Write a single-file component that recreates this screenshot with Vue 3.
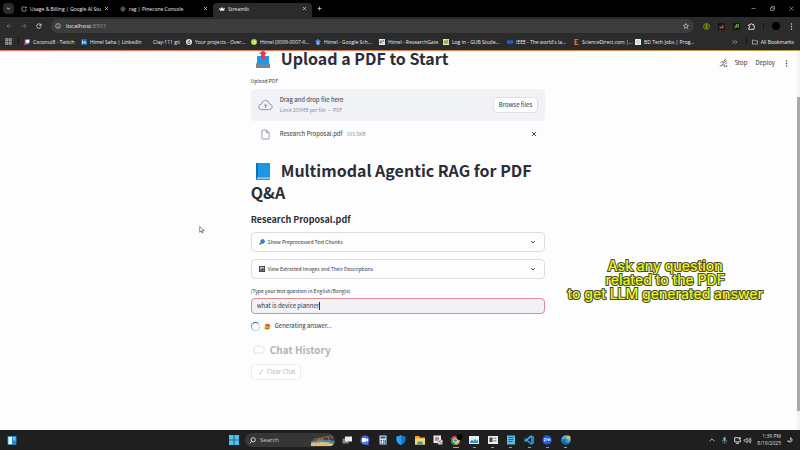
<script setup>
import { ref } from 'vue'

const question = ref('what is device planner')

const tabs = [
  { title: 'Usage & Billing | Google AI Stu', icon: 'studio', active: false },
  { title: 'rag | Pinecone Console', icon: 'pinecone', active: false },
  { title: 'Streamlit', icon: 'crown', active: true },
]

const bookmarks = [
  { label: 'Coconut8 - Twitch', icon: 'twitch' },
  { label: 'Himel Saha | LinkedIn', icon: 'linkedin' },
  { label: 'Clay-111 git', icon: 'none' },
  { label: 'Your projects - Over...', icon: 'overleaf' },
  { label: 'Himel (0009-0007-6...', icon: 'orcid' },
  { label: 'Himel - Google Sch...', icon: 'scholar' },
  { label: 'Himel - ResearchGate', icon: 'gate' },
  { label: 'Log in - GUB Stude...', icon: 'gub' },
  { label: "IEEE - The world's la...", icon: 'ieee' },
  { label: 'ScienceDirect.com |...', icon: 'science' },
  { label: 'BD Tech Jobs | Prog...', icon: 'jobs' },
]

const apps = [
  { name: 'Task view', icon: 'taskview' },
  { name: 'Chat', icon: 'chat' },
  { name: 'Calculator', icon: 'calc' },
  { name: 'Security', icon: 'shield' },
  { name: 'File Explorer', icon: 'folder' },
  { name: 'Snipping Tool', icon: 'snip' },
  { name: 'Chrome', icon: 'chrome', open: true, current: true },
  { name: 'Task Manager', icon: 'monitor', open: true },
  { name: 'Viewer', icon: 'viewer', open: true },
  { name: 'Notepad', icon: 'notepad', open: true },
  { name: 'VS Code', icon: 'code', open: true },
  { name: 'Zoom', icon: 'zm', open: true },
  { name: 'Edge', icon: 'edge', open: true },
]
</script>

<template>
  <div class="screen">
    <header class="browser">
      <div class="tabstrip">
        <button class="tab-search" aria-label="Search tabs">
          <svg viewBox="0 0 10 10"><path d="M3 4l2 2 2-2" class="line bold" /></svg>
        </button>
        <div v-for="t in tabs" :key="t.title" class="tab" :class="{ active: t.active }">
          <svg viewBox="0 0 10 10" class="fav">
            <path v-if="t.icon === 'studio'" d="M6 1.5H3Q1.5 1.5 1.5 3v4Q1.5 8.5 3 8.5h4Q8.5 8.5 8.5 7V5M8 1v3M6.500 2.500h3" class="line" />
            <g v-else-if="t.icon === 'pinecone'" class="line dim"><circle cx="5" cy="5" r="3.500" /><path d="M5 1v8M2 4h6M2 6.500h6" /></g>
            <path v-else d="M0 2.500l2.500 2L5 1.500l2.500 3L10 2.500 8.500 8h-7z" fill="#eee" />
          </svg>
          <span class="tab-title">{{ t.title }}</span>
          <button class="plain" :aria-label="'Close ' + t.title">
            <svg viewBox="0 0 10 10"><path d="M2 2l6 6M8 2L2 8" class="line bold" /></svg>
          </button>
        </div>
        <button class="plain new-tab" aria-label="New tab">
          <svg viewBox="0 0 10 10"><path d="M5 1v8M1 5h8" class="line bold" /></svg>
        </button>
        <div class="window-buttons">
          <button class="plain" aria-label="Minimize"><svg viewBox="0 0 10 10"><path d="M1 5h8" class="line" /></svg></button>
          <button class="plain" aria-label="Restore"><svg viewBox="0 0 10 10"><path d="M1 3.500h5.500V9H1zM3 3V1h6v6H7" class="line" /></svg></button>
          <button class="plain" aria-label="Close window"><svg viewBox="0 0 10 10"><path d="M1 1l8 8M9 1L1 9" class="line" /></svg></button>
        </div>
      </div>

      <div class="toolbar">
        <button class="plain dimmed" aria-label="Back"><svg viewBox="0 0 10 10"><path d="M9 5H1.500M5 1.500L1.500 5 5 8.500" class="line" /></svg></button>
        <button class="plain dimmed" aria-label="Forward"><svg viewBox="0 0 10 10"><path d="M1 5h7.500M5 1.500L8.500 5 5 8.500" class="line" /></svg></button>
        <button class="plain" aria-label="Reload"><svg viewBox="0 0 10 10"><path d="M8.200 3.500A3.700 3.700 0 1 0 8.500 6M8.600 1v3H5.600" class="line bold" /></svg></button>
        <div class="omnibox">
          <svg viewBox="0 0 10 10" class="site"><circle cx="5" cy="5" r="4" class="line" /><path d="M5 4.500v3M5 2.500v1" class="line" /></svg>
          <span class="url">localhost<i>:8501</i></span>
          <svg viewBox="0 0 10 10" class="star"><path d="M5 .8l1.300 2.800 3 .4-2.200 2 .6 3L5 7.500 2.300 9l.6-3-2.200-2 3-.4z" class="line" /></svg>
        </div>
        <div class="extensions">
          <svg viewBox="0 0 10 10"><circle cx="5" cy="5" r="4.300" fill="#41420f" stroke="#8f9420" /><path d="M5 2v6M3.500 3.500h3M3.500 6.500h3" stroke="#a5a92b" /></svg>
          <svg viewBox="0 0 10 10"><rect width="10" height="10" rx="1" fill="#151515" /><path d="M2 5h4V3h2v5H2z" fill="#b04c38" /></svg>
          <svg viewBox="0 0 10 10"><rect width="10" height="10" rx="1" fill="#101510" /><path d="M3 8V4h4M5 2h3v4H5z" fill="none" stroke="#69b34a" stroke-width="1.200" /></svg>
          <svg viewBox="0 0 10 10" class="puzzle"><path d="M1 2.500h2.500Q3.500 1 5 1t1.500 1.500H8.500V5Q9.500 5.200 9.500 6t-1 1v2H1V6.800Q2.500 6.500 2.500 5.500T1 4.300z" class="line bold" /></svg>
          <span class="sep"></span>
          <span class="avatar"></span>
          <button class="plain" aria-label="Browser menu"><svg viewBox="0 0 10 10" fill="#ddd"><circle cx="5" cy="1.500" r="1" /><circle cx="5" cy="5" r="1" /><circle cx="5" cy="8.500" r="1" /></svg></button>
        </div>
      </div>

      <nav class="bookmarks" aria-label="Bookmarks">
        <svg viewBox="0 0 10 10" class="apps-grid"><path d="M1 1h3v3H1zM6 1h3v3H6zM1 6h3v3H1zM6 6h3v3H6z" class="line" /></svg>
        <span class="sep"></span>
        <a v-for="b in bookmarks" :key="b.label" href="#">
          <svg viewBox="0 0 10 10" class="bm">
            <g v-if="b.icon === 'twitch'"><path d="M1 2l1.500-2H10v6L7 9H5l-1 1V9H1z" fill="#8b5cf0" /><path d="M3 1.500h5.500V5L7 6.500H3z" fill="#fff" /><circle cx="2" cy="8" r="2" fill="#e33e58" /></g>
            <g v-else-if="b.icon === 'linkedin'"><rect width="10" height="10" rx="1" fill="#1769b5" /><path d="M2.500 4v4M2.500 2v1M5 4v4M5 5.500q0-1.500 1.400-1.500T8 5.500V8" stroke="#fff" fill="none" stroke-width="1.300" /></g>
            <g v-else-if="b.icon === 'overleaf'"><circle cx="5" cy="5" r="5" fill="#eee" /><path d="M7 1.500Q3 3 3 6a2 2 0 1 0 2-2" fill="none" stroke="#315a58" stroke-width="1.500" /></g>
            <g v-else-if="b.icon === 'orcid'"><circle cx="5" cy="5" r="5" fill="#a6ce39" /><path d="M3 3v4.500M5 3v4.500h1q2-.5 2-2.200T6 3z" stroke="#fff" fill="none" /></g>
            <g v-else-if="b.icon === 'scholar'"><path d="M0 4l5-4 5 4-5 3z" fill="#4285f4" /><circle cx="5" cy="7" r="3" fill="#78aaf4" /></g>
            <g v-else-if="b.icon === 'gate'"><rect width="10" height="10" fill="#eee" /><path d="M2 8V3h2q1.500 0 1.500 1.300T4 5.700H2M4 5.700L6 8M8.500 2H7v2h1.500V3" fill="none" stroke="#444" /></g>
            <g v-else-if="b.icon === 'gub'"><rect width="10" height="10" fill="#e7edbb" /><path d="M2 8V3h2v5M6 8V2h2v6" stroke="#7c9d25" stroke-width="1.500" fill="none" /></g>
            <g v-else-if="b.icon === 'ieee'"><rect y="1" width="10" height="8" fill="#174596" /><path d="M1 3.500v3M3 3.500h1.500M3 5h1.500M3 6.500h1.500M6 3.500h1.500M6 5h1.500M6 6.500h1.500M9 3.500v3" stroke="#8daee8" stroke-width=".8" /></g>
            <g v-else-if="b.icon === 'science'"><path d="M2 1h7M2 5h5M2 9h7M4 1v8" stroke="#e4793c" stroke-width="1.600" /></g>
            <g v-else-if="b.icon === 'jobs'"><rect width="10" height="10" rx="1" fill="#eee" /><circle cx="5" cy="5" r="2.500" fill="none" stroke="#aaa" /></g>
          </svg>
          {{ b.label }}
        </a>
        <div class="bookmarks-end">
          <svg viewBox="0 0 10 10"><path d="M1.500 2.500L4 5 1.500 7.500M5.500 2.500L8 5 5.500 7.500" class="line" /></svg>
          <span class="sep"></span>
          <a href="#"><svg viewBox="0 0 10 10" class="bm"><path d="M.8 1.800h3l1 1.200h4.400v5.500H.8z" class="line" /></svg>All Bookmarks</a>
        </div>
      </nav>
    </header>

    <main class="page">
      <div class="page-actions">
        <svg viewBox="0 0 12 12" class="runner"><circle cx="8.500" cy="2" r="1.300" /><path d="M7 4L3.500 3.500 2 5.500M7 4l2 2 2-1M7 4L4.500 7.500 7.500 8l-.5 3M4.500 7.500L4 9H1M9 8.500h2M8.500 10h2" /></svg>
        <button class="plain">Stop</button>
        <button class="plain">Deploy</button>
        <button class="plain" aria-label="App menu"><svg viewBox="0 0 10 10" fill="#444"><circle cx="5" cy="1.500" r="1.100" /><circle cx="5" cy="5" r="1.100" /><circle cx="5" cy="8.500" r="1.100" /></svg></button>
      </div>

      <div class="content">
        <h1 class="upload-title">
          <svg viewBox="0 0 16 18" class="emoji"><path d="M3 9h10l2 5v3H1v-3z" fill="#a7b0b7" /><path d="M1 14h4l1 1h4l1-1h4v4H1z" fill="#7b858d" /><path d="M2 6h12v8h-3l-1 1H6l-1-1H2z" fill="#1b98e8" /><path d="M6 9V4H4l4-4 4 4h-2v5z" fill="#e03e50" /></svg>Upload a PDF to Start
        </h1>

        <label for="pdf" class="field-label">Upload PDF</label>
        <section class="dropzone">
          <svg viewBox="0 0 16 12" class="cloud"><path d="M4 11Q.8 11 .8 8 .8 5.400 3.700 5 4.500 1 8 1t4.300 4Q15.200 5.400 15.200 8T12 11zM8 9.500V5.500M6.200 7L8 5.300 9.800 7" /></svg>
          <div class="drop-text">
            <span>Drag and drop file here</span>
            <small>Limit 200MB per file • PDF</small>
          </div>
          <button id="pdf" class="browse">Browse files</button>
        </section>
        <div class="file-row">
          <svg viewBox="0 0 10 12" class="file"><path d="M1 2Q1 1 2 1h4l3 3v6q0 1-1 1H2q-1 0-1-1zM6 1v3h3" /></svg>
          <span>Research Proposal.pdf</span>
          <small>193.5KB</small>
          <button class="plain remove" aria-label="Remove file"><svg viewBox="0 0 10 10"><path d="M1.500 1.500l7 7M8.500 1.500l-7 7" /></svg></button>
        </div>

        <h1 class="app-title">
          <svg viewBox="0 0 16 18" class="emoji"><path d="M1 1h14v16H1z" fill="#1e96e6" /><path d="M1 1h2v16H1z" fill="#0c72b8" /><path d="M2 15.500h13V17H2z" fill="#b8d7ea" /><path d="M1 16.800h14v1H1z" fill="#0c72b8" /></svg>Multimodal Agentic RAG for PDF Q&amp;A
        </h1>
        <h3>Research Proposal.pdf</h3>

        <button class="expander">
          <svg viewBox="0 0 10 10" class="mini"><path d="M4.500 5.500L1 9" stroke="#333b47" stroke-width="2" /><circle cx="6" cy="4" r="3.200" fill="#248de0" stroke="#17649e" /></svg>
          <span>Show Preprocessed Text Chunks</span>
          <svg viewBox="0 0 10 10" class="chevron"><path d="M2 3.500l3 3 3-3" /></svg>
        </button>
        <button class="expander">
          <svg viewBox="0 0 10 10" class="mini"><rect x=".7" y=".7" width="8.600" height="8.600" fill="#c5c5c5" stroke="#333" stroke-width="1.400" /><path d="M2 8V5l2 1 2-3 2 2v3z" fill="#444" /></svg>
          <span>View Extracted Images and Their Descriptions</span>
          <svg viewBox="0 0 10 10" class="chevron"><path d="M2 3.500l3 3 3-3" /></svg>
        </button>

        <label for="question" class="field-label">(Type your text question in English/Bangla)</label>
        <div class="question">
          <input id="question" v-model="question" type="text" autocomplete="off" spellcheck="false" />
          <span class="caret"></span>
        </div>

        <div class="status" role="status">
          <span class="spinner"></span>
          <svg viewBox="0 0 10 10" class="mini"><circle cx="5" cy="5.500" r="4.200" fill="#f3b62c" /><path d="M1 2l4-1 4 2-1 2-5-1z" fill="#d9573f" /><path d="M3 5.500h1M6 5.500h1M3 7.500q2 1 4 0" stroke="#613b16" fill="none" /><path d="M0 6l3 2-1 2z" fill="#e58d28" /></svg>
          Generating answer...
        </div>

        <h2>
          <svg viewBox="0 0 14 12" class="bubble"><path d="M2 9Q.7 7.500.7 5.500.7 1 7 1t6.300 4.500T7 10Q5 10 4 9.500L1.500 11z" /></svg>
          Chat History
        </h2>
        <button class="clear" disabled>
          <svg viewBox="0 0 10 10" class="mini"><path d="M8.500.5L4.500 6" stroke="#d9a49e" stroke-width="1.200" /><path d="M3 5l2.500 2L3 9.500l-2 0z" fill="#efd9a0" /></svg>
          Clear Chat
        </button>
      </div>

      <svg viewBox="0 0 10 14" class="pointer"><path d="M1 1v10l2.500-2.300 1.700 3.800 1.600-.8L5.200 8H9z" fill="#fff" stroke="#333" /></svg>
      <p class="callout">Ask any question<br />related to the PDF<br />to get LLM generated answer</p>
      <div class="scrollbar"><span></span></div>
    </main>

    <footer class="taskbar">
      <svg viewBox="0 0 10 10" class="widgets"><rect width="10" height="10" rx="1" fill="#2488d8" /><path d="M1 1h4v8H1z" fill="#f4fbff" /><path d="M6 1h3v4H6z" fill="#6bc7f6" /></svg>
      <div class="dock">
        <svg viewBox="0 0 10 10" class="start"><path d="M0 0h4.700v4.700H0zM5.300 0H10v4.700H5.300zM0 5.300h4.700V10H0zM5.300 5.300H10V10H5.300z" fill="#4cc2f5" /></svg>
        <label class="search">
          <svg viewBox="0 0 10 10" class="glass"><circle cx="6" cy="4" r="3" class="line bold" /><path d="M4 6L1 9" class="line bold" /></svg>
          <input type="text" placeholder="Search" aria-label="Search" />
          <svg viewBox="0 0 24 11" class="scene"><path d="M0 6q12-3 24 0v3q-1 2-3 2H0z" fill="#3d86a8" /><path d="M0 8q12-3 23 1l-2 2H0z" fill="#ddbd80" /><path d="M2 4L20 0l3 3-2 1-2-2L4 6z" fill="#785640" /><path d="M8 3v5M17 2l3 7M4 8l8-4" stroke="#a97d58" fill="none" /></svg>
        </label>
        <div class="apps">
          <button v-for="a in apps" :key="a.name" class="app" :class="{ open: a.open, current: a.current }" :aria-label="a.name">
            <svg viewBox="0 0 20 20">
              <g v-if="a.icon === 'taskview'"><path d="M1 7h12v10H1z" fill="#858585" /><path d="M6 3h14v10H6z" fill="#e9e9e9" /></g>
              <g v-else-if="a.icon === 'chat'"><circle cx="10" cy="10" r="9" fill="#5663e8" /><path d="M1 10q1 8 8 9l9 1-2-4z" fill="#507bf0" /><rect x="4" y="6" width="8" height="8" rx="2" fill="#fff" /><path d="M12 9l4-3v8l-4-3z" fill="#fff" /></g>
              <g v-else-if="a.icon === 'calc'"><path d="M3 1h14v18H3z" fill="#d4e6ee" /><path d="M5 3h10v4H5z" fill="#245b83" /><path d="M5 10h3v3H5zM10 10h2v3h-2zM5 15h3v3H5zM10 15h2v3h-2z" fill="#526775" /><path d="M13 10h3v8h-3z" fill="#218bd6" /></g>
              <g v-else-if="a.icon === 'shield'"><path d="M10 0q4 3 9 3v6q0 7-9 11Q1 16 1 9V3q5 0 9-3z" fill="#1678ce" /><path d="M10 0v20Q1 16 1 9V3q5 0 9-3z" fill="#2da1ed" /></g>
              <g v-else-if="a.icon === 'folder'"><path d="M0 2h8l2 3h10v14H0z" fill="#e5a923" /><path d="M0 7h20v12H0z" fill="#ffd760" /><path d="M5 13h10v6H5z" fill="#3891cf" /></g>
              <g v-else-if="a.icon === 'snip'"><path d="M1 1h15v15H1z" fill="#eee" /><path d="M4 4h8v8H4z" fill="#c58a7f" /><path d="M10 10h9v9h-9z" fill="#cfd9df" /><path d="M7 18L18 8M12 12l6 6" stroke="#777" stroke-width="1.500" /></g>
              <g v-else-if="a.icon === 'chrome'"><circle cx="9" cy="11" r="9" fill="#e2b52c" /><path d="M1 6q3-5 8-4l8 5H9l-4 7z" fill="#dc4837" /><path d="M1 6l6 8 3 6Q2 20 0 13q-.5-4 1-7z" fill="#359c52" /><circle cx="9" cy="11" r="4" fill="#3986e4" stroke="#fff" stroke-width="1.500" /><circle cx="17" cy="4" r="6" fill="#050505" /></g>
              <g v-else-if="a.icon === 'monitor'"><path d="M0 2h20v16H0z" fill="#e6eef3" /><path d="M2 14l4-5 3 4 3-6 3 5 3-3v7H2z" fill="#2d8fc7" /></g>
              <g v-else-if="a.icon === 'viewer'"><path d="M0 2h20v16H0z" fill="#eee" /><path d="M3 5h6v9H3z" fill="#31543c" /><path d="M11 5h6v3h-6zM11 10h6v3h-6z" fill="#999" /></g>
              <g v-else-if="a.icon === 'notepad'"><path d="M2 1h16v18H2z" fill="#59b9e1" /><path d="M5 5h10M5 9h10M5 13h8" stroke="#174d6c" stroke-width="1.500" /></g>
              <g v-else-if="a.icon === 'code'"><path d="M14 0l6 3v14l-6 3L0 8l3-2 11 9z" fill="#2489ca" /><path d="M14 0v5L3 14l-3-2z" fill="#39a6ed" /></g>
              <g v-else-if="a.icon === 'zm'"><circle cx="10" cy="10" r="9.500" fill="#175ce5" /><path d="M4 7h4l-4 5h4M10 12V8h6v4M13 8v4" fill="none" stroke="#fff" stroke-width="1.400" /></g>
              <g v-else><circle cx="10" cy="10" r="9.500" fill="#2689d1" /><path d="M1 8Q3 0 11 1q9 1 8 9-1 4-6 3 2-6-4-6-5 0-8 1z" fill="#4db6d8" /><path d="M8 8q-3 6 3 8 4 1 7-2-5 8-13 3Q0 12 8 8z" fill="#125da8" /><circle cx="15" cy="5" r="4" fill="#efb43c" /></g>
            </svg>
          </button>
        </div>
      </div>
      <div class="tray">
        <svg viewBox="0 0 10 10" class="small"><path d="M1 7l4-4 4 4" class="line bold" /></svg>
        <svg viewBox="0 0 10 10"><rect x="3.500" y="0" width="3" height="6" rx="1.500" fill="#8fb8c4" /><path d="M1.500 4q0 4 3.500 4t3.500-4M5 8v2" fill="none" stroke="#4e92a6" /></svg>
        <div class="pair">
          <svg viewBox="0 0 10 10"><path d="M6 1H1v6h8V4M3 9h4M7 1h2v2H7z" class="line bold" /></svg>
          <svg viewBox="0 0 10 10"><path d="M0 4h2l2.500-2.500v7L2 6H0zM6 3.500q1 1.500 0 3M7.500 2q2 3 0 6M9 1q2 4 0 8" class="line" /></svg>
        </div>
        <div class="clock"><span>1:39 PM</span><span>8/19/2025</span></div>
        <svg viewBox="0 0 10 10" class="small"><path d="M6 1q4 3 2 6-3 3-7 0 4 0 5-2 1-2 0-4z" class="line bold" /></svg>
      </div>
    </footer>
  </div>
</template>

<style>
body {
  background: #fdfdfd;
}
</style>

<style scoped>
* {
  box-sizing: border-box;
}
.screen {
  display: flex;
  flex-direction: column;
  min-height: 100vh;
  color: #31333f;
  font-family: "Noto Sans CJK SC", "Noto Sans", sans-serif;
  font-size: 6px;
  line-height: 10px;
}
svg {
  display: block;
  flex: none;
  width: 7px;
  height: 7px;
  overflow: visible;
}
button {
  font: inherit;
  color: inherit;
}
.plain {
  display: flex;
  padding: 0;
  border: 0;
  background: none;
}
.line {
  fill: none;
  stroke: #ddd;
  stroke-width: 1;
}
.bold {
  stroke-width: 1.400;
}
.dim {
  stroke: #888;
}
.sep {
  width: 1px;
  height: 7px;
  background: #151515;
}

/* Browser chrome */
.browser {
  background: #2b2b2c;
  color: #eee;
  font-family: "Open Sans", "Noto Sans", sans-serif;
  font-size: 5px;
  border-bottom: 1px solid;
  border-image: linear-gradient(to right, #e8745c, #d9804c 70%, #b3a64a) 1;
}
.tabstrip {
  display: flex;
  align-items: center;
  height: 17px;
  padding-left: 3px;
  background: #000;
}
.tab-search {
  display: flex;
  align-items: center;
  justify-content: center;
  width: 11px;
  height: 11px;
  margin-right: 1px;
  padding: 0;
  border: 0;
  border-radius: 4px;
  background: #2b2b2c;
}
.tab {
  display: flex;
  align-items: center;
  gap: 3px;
  width: 99px;
  padding: 0 5px 0 6px;
}
.tab svg {
  width: 5px;
  height: 5px;
}
.tab .fav {
  width: 6px;
  height: 6px;
}
.tab-title {
  flex: 1;
  overflow: hidden;
  white-space: nowrap;
}
.tab.active {
  height: 14px;
  align-self: flex-end;
  padding-bottom: 3px;
  border-radius: 4px 4px 0 0;
  background: #2b2b2c;
}
.new-tab {
  margin-left: 5px;
}
.new-tab svg,
.window-buttons svg {
  width: 5px;
  height: 5px;
}
.window-buttons {
  display: flex;
  gap: 14px;
  margin-left: auto;
  padding-right: 6px;
}
.toolbar {
  display: flex;
  align-items: center;
  gap: 9px;
  height: 18px;
  padding: 0 5px 0 6px;
}
.toolbar svg {
  width: 6px;
  height: 6px;
}
.dimmed {
  opacity: 0.5;
}
.omnibox {
  display: flex;
  align-items: center;
  flex: 1;
  gap: 5px;
  height: 14px;
  padding: 0 5px 0 4px;
  border-radius: 7px;
  background: #3c3c3d;
}
.url {
  flex: 1;
  font-size: 6px;
}
.url i {
  color: #999;
  font-style: normal;
}
.extensions {
  display: flex;
  align-items: center;
  gap: 8px;
}
.extensions svg {
  width: 7px;
  height: 7px;
}
.avatar {
  width: 8px;
  height: 8px;
  border-radius: 50%;
  background: #000;
}
.bookmarks {
  display: grid;
  grid-template-columns: 10px 9px 57px 63px 42px 65px 64px 64px 64px 64px 66px 62px 60px 1fr;
  align-items: center;
  height: 15px;
  padding: 0 6px 2px 5px;
}
.bookmarks a {
  display: flex;
  align-items: center;
  gap: 3px;
  color: inherit;
  text-decoration: none;
  white-space: nowrap;
}
.bookmarks .bm {
  width: 6px;
  height: 6px;
}
.bookmarks .sep {
  margin-left: 3px;
}
.bookmarks-end {
  display: flex;
  align-items: center;
  justify-content: flex-end;
  gap: 5px;
}
.bookmarks-end svg {
  width: 6px;
  height: 6px;
}

/* App page */
.page {
  position: relative;
  flex: 1;
  overflow: hidden;
  padding: 0 4px 0 0;
  background: #fdfdfd;
}
.page-actions {
  position: absolute;
  top: 7px;
  right: 10px;
  display: flex;
  align-items: center;
  gap: 8px;
}
.page-actions svg {
  width: 7px;
  height: 7px;
}
.page-actions .runner {
  width: 9px;
  height: 9px;
  margin-right: -2px;
  fill: none;
  stroke: #555;
}
.content {
  display: flex;
  flex-direction: column;
  width: 37%;
  min-width: 294px;
  margin: 0 auto;
}
h1,
h2,
h3 {
  margin: 0;
  font-weight: 700;
  color: #2b2d38;
}
h1 {
  font-size: 16px;
  line-height: 22px;
}
.emoji {
  display: inline-block;
  width: 16px;
  height: 18px;
  margin: 0 10px 0 4px;
  vertical-align: -3px;
}
.upload-title {
  margin-top: -4px;
}
.field-label {
  margin: 7px 0 3px;
  font-size: 5px;
}
.dropzone {
  display: flex;
  align-items: center;
  height: 32px;
  padding: 0 7px;
  border-radius: 4px;
  background: #f0f2f6;
}
.cloud {
  width: 15px;
  height: 12px;
  margin-right: 7px;
  fill: none;
  stroke: #8493b5;
}
.drop-text {
  flex: 1;
}
.drop-text span,
.drop-text small {
  display: block;
}
small {
  color: #8c8d96;
  font-size: 5px;
}
.browse,
.clear {
  height: 16px;
  padding: 0 5px;
  border: 1px solid #dfe0e4;
  border-radius: 4px;
  background: #fff;
}
.file-row {
  display: flex;
  align-items: center;
  height: 26px;
  padding: 0 8px 0 10px;
}
.file {
  width: 9px;
  height: 11px;
  margin-right: 10px;
  fill: none;
  stroke: #8a93a8;
}
.file-row small {
  margin-left: 4px;
}
.remove {
  margin-left: auto;
}
.remove svg {
  width: 6px;
  height: 6px;
  stroke: #31333f;
  stroke-width: 1.500;
}
.app-title {
  margin-top: 12px;
}
h3 {
  margin: 10px 0 5px;
  font-size: 9px;
  line-height: 14px;
}
.expander {
  display: flex;
  align-items: center;
  gap: 3px;
  height: 20px;
  margin-bottom: 7px;
  padding: 0 8px 0 7px;
  border: 1px solid #dcdde2;
  border-radius: 4px;
  background: none;
  font-size: 5px;
  text-align: left;
}
.expander span {
  flex: 1;
}
.mini {
  width: 6px;
  height: 6px;
}
.chevron {
  width: 6px;
  height: 6px;
  fill: none;
  stroke: #31333f;
  stroke-width: 1.600;
}
.expander + .field-label {
  margin-top: 0;
  margin-bottom: 2px;
}
.question {
  display: flex;
  align-items: center;
  height: 16px;
  padding: 0 5px;
  border: 1px solid #e08c92;
  border-radius: 4px;
  background: #f0f2f6;
}
.question input {
  field-sizing: content;
  padding: 0;
  border: 0;
  outline: 0;
  background: none;
  color: inherit;
  font: inherit;
}
.caret {
  width: 1px;
  height: 8px;
  background: #31333f;
}
.status {
  display: flex;
  align-items: center;
  gap: 4px;
  height: 24px;
}
.status .mini {
  width: 7px;
  height: 7px;
}
.spinner {
  width: 9px;
  height: 9px;
  border: 1px solid #c3ccd8;
  border-top-color: #2f6fb3;
  border-left-color: #6f9acb;
  border-radius: 50%;
}
h2 {
  display: flex;
  align-items: center;
  gap: 5px;
  margin: 4px 0 6px;
  padding-left: 2px;
  color: #b3b4b9;
  font-size: 10px;
  line-height: 16px;
}
.bubble {
  width: 12px;
  height: 10px;
  fill: none;
  stroke: #dcdde0;
}
.clear {
  display: flex;
  align-items: center;
  align-self: flex-start;
  gap: 3px;
  padding: 0 4px 0 6px;
  border-color: #eeeef0;
  color: #b8b9bf;
}
.pointer {
  position: absolute;
  top: 175px;
  left: 199px;
  width: 6px;
  height: 8px;
}
.callout {
  position: absolute;
  top: 208px;
  right: 37px;
  margin: 0;
  color: #eef818;
  font-family: Inter, "Open Sans", sans-serif;
  font-size: 14px;
  font-weight: 500;
  line-height: 14px;
  text-align: center;
  -webkit-text-stroke: 2px #45482c;
  paint-order: stroke fill;
}
.scrollbar {
  position: absolute;
  top: 0;
  right: 0;
  bottom: 0;
  width: 3px;
  padding: 46px 0 19px;
  background: #f3f3f3;
}
.scrollbar span {
  display: block;
  height: 100%;
  background: #a9a9a9;
}

/* Taskbar */
.taskbar {
  display: grid;
  grid-template-columns: 1fr auto 1fr;
  align-items: center;
  height: 20px;
  padding: 0 7px;
  background: #201f20;
  color: #ddd;
  font-family: "Open Sans", "Noto Sans", sans-serif;
}
.widgets {
  width: 10px;
  height: 9px;
}
.dock {
  display: flex;
  align-items: center;
  gap: 6px;
}
.start {
  width: 10px;
  height: 10px;
}
.search {
  display: flex;
  align-items: center;
  gap: 4px;
  width: 90px;
  height: 14px;
  padding-left: 4px;
  overflow: hidden;
  border-radius: 7px;
  background: #383738;
}
.search input {
  flex: 1;
  min-width: 0;
  padding: 0;
  border: 0;
  background: none;
  color: #ddd;
  font: inherit;
}
.search input::placeholder {
  color: #ccc;
}
.search .glass {
  width: 7px;
  height: 7px;
}
.search .scene {
  width: 24px;
  height: 11px;
}
.apps {
  display: flex;
  justify-content: space-between;
  width: 230px;
}
.app {
  position: relative;
  display: flex;
  align-items: center;
  justify-content: center;
  width: 11px;
  height: 18px;
  padding: 0;
  border: 0;
  background: none;
}
.app svg {
  width: 10px;
  height: 10px;
}
.app.open::after {
  content: "";
  position: absolute;
  bottom: 1px;
  width: 3px;
  height: 1px;
  background: #999;
}
.app.current::after {
  width: 6px;
  background: #4cc2f5;
}
.tray {
  display: flex;
  align-items: center;
  justify-content: flex-end;
  gap: 6px;
}
.tray .small {
  width: 6px;
  height: 6px;
}
.pair {
  display: flex;
  gap: 3px;
}
.clock {
  display: flex;
  flex-direction: column;
  line-height: 7px;
  text-align: right;
  font-size: 5px;
}
</style>
